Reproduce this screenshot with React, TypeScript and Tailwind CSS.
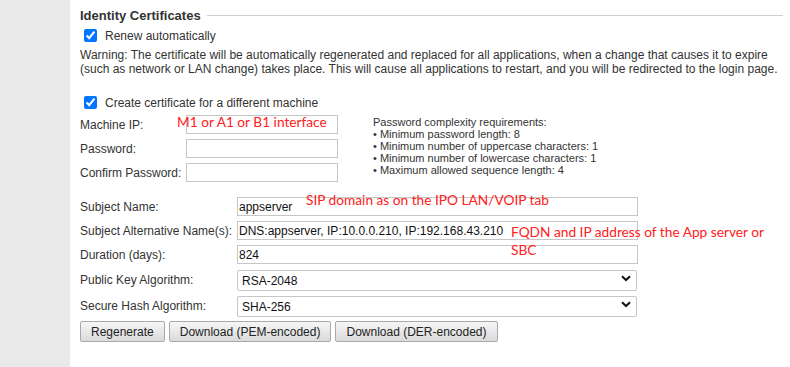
import React from "react"

const arial = { fontFamily: '"Liberation Sans", Arial, sans-serif' }

function Annotation({ className, children }: { className: string; children: React.ReactNode }) {
  return (
    <span
      className={`pointer-events-none absolute whitespace-nowrap text-[13.7px] leading-[18px] text-[#ff2020] ${className}`}
      style={{ fontFamily: 'Lato, "Open Sans", sans-serif' }}
    >
      {children}
    </span>
  )
}

function Check({ label, className }: { label: string; className?: string }) {
  return (
    <label className={`flex items-center gap-[8px] pl-[4px] text-[12px] text-[#333] ${className ?? ""}`}>
      <input type="checkbox" defaultChecked className="m-0 h-[13px] w-[13px] accent-[#0075ff]" />
      <span>{label}</span>
    </label>
  )
}

function TextRow({ label, value, labelW, inputW }: { label: string; value?: string; labelW: string; inputW: string }) {
  return (
    <div className="flex h-[19px] items-center">
      <span className={`${labelW} shrink-0 text-[12px] text-[#333]`}>{label}</span>
      <input
        readOnly
        value={value ?? ""}
        className={`${inputW} h-[19px] border border-[#c6c6c6] bg-white px-[1px] text-[12px] text-[#111] outline-none`}
      />
    </div>
  )
}

function SelectRow({ label, value }: { label: string; value: string }) {
  return (
    <div className="flex h-[21px] items-center">
      <span className="w-[157px] shrink-0 text-[12px] text-[#333]">{label}</span>
      <div className="relative w-[400px]">
        <select
          defaultValue={value}
          className="h-[21px] w-full appearance-none rounded-[2px] border border-[#c6c6c6] bg-white pl-[4px] text-[12px] text-[#111] outline-none"
        >
          <option>{value}</option>
        </select>
        <svg className="pointer-events-none absolute right-[6px] top-[7px]" width="10" height="7" viewBox="0 0 10 7">
          <path d="M1 1.2 L5 5 L9 1.2" fill="none" stroke="#111" strokeWidth="2" />
        </svg>
      </div>
    </div>
  )
}

function Btn({ children }: { children: React.ReactNode }) {
  return (
    <button className="h-[21px] rounded-[2px] border border-[#a9a9a9] bg-gradient-to-b from-[#f6f6f6] to-[#dadada] px-[10px] text-[12px] text-[#222]">
      {children}
    </button>
  )
}

export default function App() {
  return (
    <div className="flex h-[367px] w-[790px] overflow-hidden bg-white" style={arial}>
      <div className="w-[70px] shrink-0 bg-[#e9e9e9]" />
      <div className="relative flex-1 pl-[10px] pr-[7px] pt-[8px]">
        <div className="flex items-center gap-[6px]">
          <h2 className="text-[13px] font-bold leading-[15px] text-[#333]">Identity Certificates</h2>
          <div className="h-px flex-1 bg-[#cfcfcf]" />
        </div>

        <Check label="Renew automatically" className="mt-[5px] h-[15px]" />
        <p className="mt-[5px] text-[12px] leading-[14px] text-[#333]">
          Warning: The certificate will be automatically regenerated and replaced for all applications, when a change that causes it to expire
          (such as network or LAN change) takes place. This will cause all applications to restart, and you will be redirected to the login page.
        </p>

        <Check label="Create certificate for a different machine" className="mt-[19px] h-[15px]" />

        <div className="mt-[5px] flex">
          <div className="flex flex-col gap-[5px]">
            <TextRow label="Machine IP:" labelW="w-[106px]" inputW="w-[152px]" />
            <TextRow label="Password:" labelW="w-[106px]" inputW="w-[152px]" />
            <TextRow label="Confirm Password:" labelW="w-[106px]" inputW="w-[152px]" />
          </div>
          <div className="ml-[35px] mt-[1px] text-[11px] leading-[12px] text-[#333]">
            <div>Password complexity requirements:</div>
            <div>• Minimum password length: 8</div>
            <div>• Minimum number of uppercase characters: 1</div>
            <div>• Minimum number of lowercase characters: 1</div>
            <div>• Maximum allowed sequence length: 4</div>
          </div>
        </div>

        <div className="mt-[15px] flex flex-col gap-[5px]">
          <TextRow label="Subject Name:" value="appserver" labelW="w-[157px]" inputW="w-[401px]" />
          <TextRow
            label="Subject Alternative Name(s):"
            value="DNS:appserver, IP:10.0.0.210, IP:192.168.43.210"
            labelW="w-[157px]"
            inputW="w-[401px]"
          />
          <TextRow label="Duration (days):" value="824" labelW="w-[157px]" inputW="w-[401px]" />
          <SelectRow label="Public Key Algorithm:" value="RSA-2048" />
          <SelectRow label="Secure Hash Algorithm:" value="SHA-256" />
        </div>

        <div className="mt-[5px] flex gap-[4px]">
          <Btn>Regenerate</Btn>
          <Btn>Download (PEM-encoded)</Btn>
          <Btn>Download (DER-encoded)</Btn>
        </div>

        <Annotation className="left-[107px] top-[113px]">M1 or A1 or B1 interface</Annotation>
        <Annotation className="left-[236px] top-[191px]">SIP domain as on the IPO LAN/VOIP tab</Annotation>
        <Annotation className="left-[441px] top-[223px]">FQDN and IP address of the App server or</Annotation>
        <Annotation className="left-[441px] top-[241px]">SBC</Annotation>
      </div>
    </div>
  )
}
